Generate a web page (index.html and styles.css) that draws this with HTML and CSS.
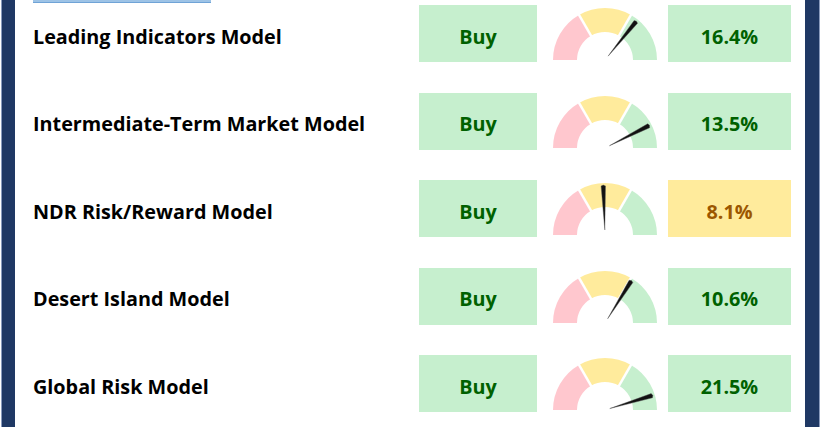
FILE: index.html
```html
<!DOCTYPE html>
<html>
<head>
<meta charset="utf-8">
<link rel="stylesheet" href="styles.css">
</head>
<body>
<div class="frame">
  <div class="content">
    <div class="header-strip"></div>
    <div class="rows">
      <div class="row">
        <div class="label">Leading Indicators Model</div>
        <div class="cell good">Buy</div>
        <svg class="gauge" viewBox="0 0 104 57" width="104" height="57">
          <path class="seg-red" d="M0 55 A52 52 0 0 1 26 9.97 L38 30.75 A28 28 0 0 0 24 55 Z"/>
          <path class="seg-yellow" d="M26 9.97 A52 52 0 0 1 78 9.97 L66 30.75 A28 28 0 0 0 38 30.75 Z"/>
          <path class="seg-green" d="M78 9.97 A52 52 0 0 1 104 55 L80 55 A28 28 0 0 0 66 30.75 Z"/>
          <line class="sep" x1="52" y1="55" x2="25" y2="8.2"/>
          <line class="sep" x1="52" y1="55" x2="79" y2="8.2"/>
          <polygon class="needle" transform="rotate(-51 52 55)" points="57,55 101,52.8 102,55 101,57.2"/>
        </svg>
        <div class="cell good pct">16.4%</div>
      </div>
      <div class="row">
        <div class="label">Intermediate-Term Market Model</div>
        <div class="cell good">Buy</div>
        <svg class="gauge" viewBox="0 0 104 57" width="104" height="57">
          <path class="seg-red" d="M0 55 A52 52 0 0 1 26 9.97 L38 30.75 A28 28 0 0 0 24 55 Z"/>
          <path class="seg-yellow" d="M26 9.97 A52 52 0 0 1 78 9.97 L66 30.75 A28 28 0 0 0 38 30.75 Z"/>
          <path class="seg-green" d="M78 9.97 A52 52 0 0 1 104 55 L80 55 A28 28 0 0 0 66 30.75 Z"/>
          <line class="sep" x1="52" y1="55" x2="25" y2="8.2"/>
          <line class="sep" x1="52" y1="55" x2="79" y2="8.2"/>
          <polygon class="needle" transform="rotate(-27 52 55)" points="57,55 101,52.8 102,55 101,57.2"/>
        </svg>
        <div class="cell good pct">13.5%</div>
      </div>
      <div class="row">
        <div class="label">NDR Risk/Reward Model</div>
        <div class="cell good">Buy</div>
        <svg class="gauge" viewBox="0 0 104 57" width="104" height="57">
          <path class="seg-red" d="M0 55 A52 52 0 0 1 26 9.97 L38 30.75 A28 28 0 0 0 24 55 Z"/>
          <path class="seg-yellow" d="M26 9.97 A52 52 0 0 1 78 9.97 L66 30.75 A28 28 0 0 0 38 30.75 Z"/>
          <path class="seg-green" d="M78 9.97 A52 52 0 0 1 104 55 L80 55 A28 28 0 0 0 66 30.75 Z"/>
          <line class="sep" x1="52" y1="55" x2="25" y2="8.2"/>
          <line class="sep" x1="52" y1="55" x2="79" y2="8.2"/>
          <polygon class="needle" transform="rotate(-92 52 55)" points="57,55 101,52.8 102,55 101,57.2"/>
        </svg>
        <div class="cell neutral pct">8.1%</div>
      </div>
      <div class="row">
        <div class="label">Desert Island Model</div>
        <div class="cell good">Buy</div>
        <svg class="gauge" viewBox="0 0 104 57" width="104" height="57">
          <path class="seg-red" d="M0 55 A52 52 0 0 1 26 9.97 L38 30.75 A28 28 0 0 0 24 55 Z"/>
          <path class="seg-yellow" d="M26 9.97 A52 52 0 0 1 78 9.97 L66 30.75 A28 28 0 0 0 38 30.75 Z"/>
          <path class="seg-green" d="M78 9.97 A52 52 0 0 1 104 55 L80 55 A28 28 0 0 0 66 30.75 Z"/>
          <line class="sep" x1="52" y1="55" x2="25" y2="8.2"/>
          <line class="sep" x1="52" y1="55" x2="79" y2="8.2"/>
          <polygon class="needle" transform="rotate(-58 52 55)" points="57,55 101,52.8 102,55 101,57.2"/>
        </svg>
        <div class="cell good pct">10.6%</div>
      </div>
      <div class="row">
        <div class="label">Global Risk Model</div>
        <div class="cell good">Buy</div>
        <svg class="gauge" viewBox="0 0 104 57" width="104" height="57">
          <path class="seg-red" d="M0 55 A52 52 0 0 1 26 9.97 L38 30.75 A28 28 0 0 0 24 55 Z"/>
          <path class="seg-yellow" d="M26 9.97 A52 52 0 0 1 78 9.97 L66 30.75 A28 28 0 0 0 38 30.75 Z"/>
          <path class="seg-green" d="M78 9.97 A52 52 0 0 1 104 55 L80 55 A28 28 0 0 0 66 30.75 Z"/>
          <line class="sep" x1="52" y1="55" x2="25" y2="8.2"/>
          <line class="sep" x1="52" y1="55" x2="79" y2="8.2"/>
          <polygon class="needle" transform="rotate(-17 52 55)" points="57,55 101,52.8 102,55 101,57.2"/>
        </svg>
        <div class="cell good pct">21.5%</div>
      </div>
    </div>
  </div>
</div>
</body>
</html>
```

FILE: styles.css
```css
html, body {
  margin: 0;
  padding: 0;
  background: #ffffff;
}

body {
  width: 820px;
  height: 427px;
  overflow: hidden;
  font-family: "Open Sans", "Liberation Sans", sans-serif;
}

.frame {
  margin-left: 2px;
  width: 790px;
  height: 427px;
  border-left: 13px solid #1f3864;
  border-right: 14px solid #1f3864;
  box-shadow: -1px 0 0 #8a9bbd, 1px 0 0 #8a9bbd;
}

.content {
  padding-left: 18px;
}

.header-strip {
  width: 178px;
  height: 2px;
  background: #9dc3e6;
  border-bottom: 1px solid #6fa3d6;
}

.rows {
  padding-top: 2px;
  display: flex;
  flex-direction: column;
  gap: 30.5px;
}

.row {
  display: flex;
  align-items: flex-start;
  height: 57px;
}

.label {
  width: 386px;
  height: 57px;
  box-sizing: border-box;
  padding-top: 5px;
  display: flex;
  align-items: center;
  font-size: 19.8px;
  font-weight: 700;
  color: #000000;
  white-space: nowrap;
}

.cell {
  width: 118px;
  height: 57px;
  box-sizing: border-box;
  padding-top: 5px;
  display: flex;
  align-items: center;
  justify-content: center;
  font-size: 19.8px;
  font-weight: 700;
}

.good {
  background: #c6efce;
  color: #006100;
}

.neutral {
  background: #ffeb9c;
  color: #9c5700;
}

.gauge {
  display: block;
  margin-left: 16px;
  margin-right: 11px;
}

.pct {
  width: 123px;
}

.seg-red { fill: #ffc7ce; }
.seg-yellow { fill: #ffeb9c; }
.seg-green { fill: #c6efce; }

.sep {
  stroke: #ffffff;
  stroke-width: 2.5;
}

.needle {
  fill: #111111;
  stroke: #555555;
  stroke-width: 0.4;
}
```
